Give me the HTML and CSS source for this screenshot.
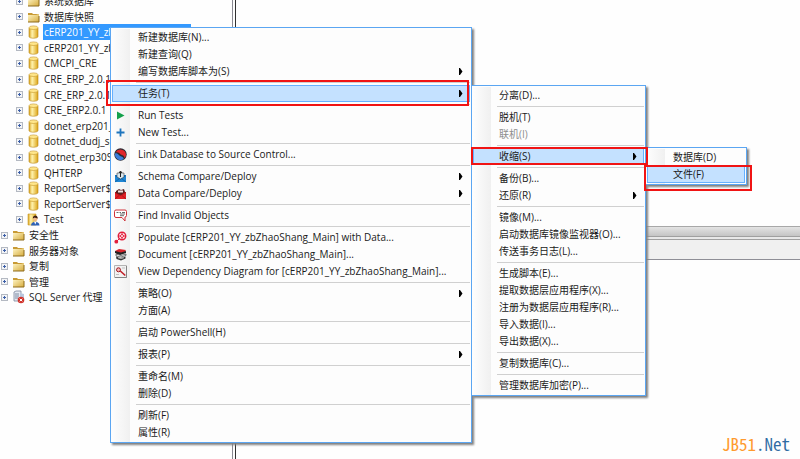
FILE: index.html
```html
<!DOCTYPE html>
<html lang="zh-CN">
<head>
  <meta charset="UTF-8">
  <meta name="viewport" content="width=device-width, initial-scale=1.0">
  <title>SQL Server</title>
  <link rel="stylesheet" href="styles.css">
</head>
<body>

  <svg class="sprite" aria-hidden="true">
    <defs>
      <linearGradient id="gold" x1="0" x2="1" y1="0" y2="0">
        <stop offset="0" stop-color="#d9a21c"/>
        <stop offset="0.35" stop-color="#fff3ae"/>
        <stop offset="1" stop-color="#dba316"/>
      </linearGradient>
      <linearGradient id="paper" x1="0" x2="1" y1="0" y2="1">
        <stop offset="0" stop-color="#fff6c8"/>
        <stop offset="1" stop-color="#d6ab3c"/>
      </linearGradient>
    </defs>
    <symbol id="folder" viewBox="0 0 13 12">
      <path d="M1 2h4l1 1h6v8H1z" fill="#c89a35"/>
      <path d="M1 4h8l3-1v7.500l-1 .5H1z" fill="url(#paper)"/>
      <path d="M1 11h11V5" fill="none" stroke="#8d6a1c"/>
    </symbol>
    <symbol id="db" viewBox="0 0 13 14">
      <path d="M2 3v8.500c0 2.300 9 2.300 9 0V3z" fill="url(#gold)" stroke="#b98616" stroke-width=".6"/>
      <ellipse cx="6.500" cy="2.700" rx="4.500" ry="1.800" fill="#ffe68a" stroke="#c4962a" stroke-width=".6"/>
    </symbol>
    <symbol id="dbuser" viewBox="0 0 13 14">
      <path d="M1 2h8v11H1z" fill="url(#gold)" stroke="#c99a28" stroke-width=".6"/>
      <path d="M4 13.500c0-5 8.500-5 8.500 0z" fill="#2e62b8"/>
      <path d="M7 9.500l1.300 3 1.300-3z" fill="#fff"/>
      <circle cx="8.300" cy="6.800" r="2.300" fill="#f0b98a"/>
      <path d="M5.800 6.500c0-4 5-4 5 0-1.500 0-2.500-1-3-1z" fill="#3a1c10"/>
    </symbol>
    <symbol id="agent" viewBox="0 0 13 14">
      <path d="M2 2l2-1h5v10H2z" fill="#e4e9f2" stroke="#7c879c" stroke-width=".8"/>
      <path d="M3 4h4M3 6h4M3 8h3" stroke="#66758f" stroke-width=".8"/>
      <path d="M8 3l4 1v4H8z" fill="#b9c6dc"/>
      <circle cx="9" cy="10" r="3.300" fill="#d0342c"/>
      <path d="M7.700 8.700l2.600 2.600m0-2.600l-2.600 2.600" stroke="#fff" stroke-width="1"/>
    </symbol>
    <symbol id="arrow" viewBox="0 0 4 7">
      <path d="M0 0h1l2.500 3.500L1 7H0z" fill="#000"/>
    </symbol>
    <symbol id="run" viewBox="0 0 13 13">
      <path d="M3 2.500l7.500 4L3 10.500z" fill="#13a04a"/>
    </symbol>
    <symbol id="plus" viewBox="0 0 13 13">
      <path d="M6.500 2.500v8M2.500 6.500h8" stroke="#1d74bd" stroke-width="1.800"/>
    </symbol>
    <symbol id="link" viewBox="0 0 13 13">
      <circle cx="6.500" cy="6.500" r="6.200" fill="#2b2b33"/>
      <path d="M1.500 4.500a5.600 5.600 0 0 1 10.500 2c0 1.500-.5 2.500-1.500 3.500C10 7 8.500 7.500 6.800 6.500 5.500 5.500 4 3.500 1.500 4.500z" fill="#e0252b"/>
      <path d="M1 5.500C3 4.500 4 6 5.500 7.500S9 8 9.800 11A5.600 5.600 0 0 1 1 5.500z" fill="#3b7ddb"/>
    </symbol>
    <symbol id="schema" viewBox="0 0 13 13">
      <path d="M1 5h11v7H1z" fill="#1573bf"/>
      <path d="M3 3h7v4L6.500 9 3 7z" fill="#d9e6ee" stroke="#444" stroke-width=".6"/>
      <path d="M6.500 7V1.500M5 3l1.500-2L8 3" fill="none" stroke="#222" stroke-width="1"/>
      <path d="M1 6l5.500 4L12 6v6H1z" fill="#1f86d4"/>
      <path d="M1 12l4.500-3.500M12 12L7.500 8.500" stroke="#0c4f8c" stroke-width=".6"/>
    </symbol>
    <symbol id="data" viewBox="0 0 13 13">
      <path d="M1 5h11v7H1z" fill="#b3151b"/>
      <path d="M2 4l3-2 2 1 3-1 1 3-4 3-5-2z" fill="#5a2020"/>
      <path d="M4 3.500h5v2H4z" fill="#ece0e0"/>
      <path d="M1 6l5.500 3L12 6v6H1z" fill="#e02026"/>
      <path d="M1 12l4-3.500M12 12L8 8.500" stroke="#8e0c12" stroke-width=".6"/>
    </symbol>
    <symbol id="find" viewBox="0 0 13 13">
      <path d="M2 1h9q1.500 0 1.500 1.500v4Q12.500 8 11 8v4L8 8.500H2Q.5 8.500.5 7V2.500Q.5 1 2 1z" fill="#fff" stroke="#cf3038" stroke-width="1"/>
      <path d="M2.500 3.500h2M5.500 3.500H7M6 5h5M6 6.700h4M8 3.500h3" stroke="#444" stroke-width=".8"/>
    </symbol>
    <symbol id="populate" viewBox="0 0 13 13">
      <circle cx="8" cy="5" r="3.700" fill="#fff" stroke="#e21f3c" stroke-width="1.500"/>
      <circle cx="8" cy="5" r="1.500" fill="none" stroke="#e21f3c"/>
      <path d="M8 1v2.500M4.500 5h2M9.500 5h2M8 6.500V9M3 10l2.500-2.500" stroke="#e21f3c" stroke-width="1"/>
      <circle cx="2.300" cy="10.700" r="1.900" fill="#e21f3c"/>
    </symbol>
    <symbol id="document" viewBox="0 0 13 13">
      <path d="M1 3l4-2 7 1-2 3-7 1z" fill="#d9232b"/>
      <path d="M1 3l6 1.500 5-1.500v2L6 7 1 5z" fill="#222"/>
      <path d="M2 6l5 1.500L12 6v1.500L7 9 2 8z" fill="#f4f4f4" stroke="#222" stroke-width=".6"/>
      <path d="M2 8.500L6.500 10l5-1.500v2L7 12.500l-4.500-1.500z" fill="#333"/>
      <path d="M4 9.700l3 .8 3-.8" fill="none" stroke="#fff" stroke-width=".6"/>
    </symbol>
    <symbol id="diagram" viewBox="0 0 13 13">
      <path d="M.5.5h12v12H.5z" fill="#f2f2f2" stroke="#b4b4b4"/>
      <path d="M12.500 1v11.500H1" fill="none" stroke="#777" stroke-width=".8"/>
      <circle cx="4.500" cy="4.800" r="2" fill="#f5b9b9" stroke="#a01820" stroke-width="1"/>
      <path d="M6.300 6l5 4.500" stroke="#c01f28" stroke-width="1.600"/>
      <path d="M2 9.500h3M8 3h3" stroke="#aaa" stroke-width=".7"/>
    </symbol>
  </svg>

  <div class="app">
    <aside class="explorer">
      <ul class="tree">
        <li class="node child"><button class="expander" aria-label="展开"></button><svg class="node-icon"><use href="#folder"/></svg><span class="node-text">系统数据库</span></li>
        <li class="node child"><button class="expander" aria-label="展开"></button><svg class="node-icon"><use href="#folder"/></svg><span class="node-text">数据库快照</span></li>
        <li class="node child"><button class="expander" aria-label="展开"></button><svg class="node-icon"><use href="#db"/></svg><span class="node-text selected">cERP201_YY_zb</span></li>
        <li class="node child"><button class="expander" aria-label="展开"></button><svg class="node-icon"><use href="#db"/></svg><span class="node-text">cERP201_YY_zb</span></li>
        <li class="node child"><button class="expander" aria-label="展开"></button><svg class="node-icon"><use href="#db"/></svg><span class="node-text">CMCPI_CRE</span></li>
        <li class="node child"><button class="expander" aria-label="展开"></button><svg class="node-icon"><use href="#db"/></svg><span class="node-text">CRE_ERP_2.0.1_</span></li>
        <li class="node child"><button class="expander" aria-label="展开"></button><svg class="node-icon"><use href="#db"/></svg><span class="node-text">CRE_ERP_2.0.1_</span></li>
        <li class="node child"><button class="expander" aria-label="展开"></button><svg class="node-icon"><use href="#db"/></svg><span class="node-text">CRE_ERP2.0.1</span></li>
        <li class="node child"><button class="expander" aria-label="展开"></button><svg class="node-icon"><use href="#db"/></svg><span class="node-text">donet_erp201_</span></li>
        <li class="node child"><button class="expander" aria-label="展开"></button><svg class="node-icon"><use href="#db"/></svg><span class="node-text">dotnet_dudj_sp</span></li>
        <li class="node child"><button class="expander" aria-label="展开"></button><svg class="node-icon"><use href="#db"/></svg><span class="node-text">dotnet_erp30S</span></li>
        <li class="node child"><button class="expander" aria-label="展开"></button><svg class="node-icon"><use href="#db"/></svg><span class="node-text">QHTERP</span></li>
        <li class="node child"><button class="expander" aria-label="展开"></button><svg class="node-icon"><use href="#db"/></svg><span class="node-text">ReportServer$</span></li>
        <li class="node child"><button class="expander" aria-label="展开"></button><svg class="node-icon"><use href="#db"/></svg><span class="node-text">ReportServer$</span></li>
        <li class="node child"><button class="expander" aria-label="展开"></button><svg class="node-icon"><use href="#dbuser"/></svg><span class="node-text">Test</span></li>
        <li class="node"><button class="expander" aria-label="展开"></button><svg class="node-icon"><use href="#folder"/></svg><span class="node-text">安全性</span></li>
        <li class="node"><button class="expander" aria-label="展开"></button><svg class="node-icon"><use href="#folder"/></svg><span class="node-text">服务器对象</span></li>
        <li class="node"><button class="expander" aria-label="展开"></button><svg class="node-icon"><use href="#folder"/></svg><span class="node-text">复制</span></li>
        <li class="node"><button class="expander" aria-label="展开"></button><svg class="node-icon"><use href="#folder"/></svg><span class="node-text">管理</span></li>
        <li class="node"><button class="expander" aria-label="展开"></button><svg class="node-icon"><use href="#agent"/></svg><span class="node-text">SQL Server 代理</span></li>
      </ul>
    </aside>

    <main class="workspace">
      <div class="editor"></div>
      <div class="splitter"></div>
      <div class="tabs"></div>
      <div class="results"></div>
    </main>
  </div>

  <ul class="menu menu-main">
    <li><button class="item"><span class="icon"></span>新建数据库(N)...</button></li>
    <li><button class="item"><span class="icon"></span>新建查询(Q)</button></li>
    <li><button class="item"><span class="icon"></span>编写数据库脚本为(S)<svg class="arrow"><use href="#arrow"/></svg></button></li>
    <li class="sep"></li>
    <li class="open">
      <button class="item active"><span class="icon"></span>任务(T)<svg class="arrow"><use href="#arrow"/></svg></button>
      <span class="mark mark-task"></span>
      <ul class="menu menu-task">
        <li><button class="item"><span class="icon"></span>分离(D)...</button></li>
        <li class="sep"></li>
        <li><button class="item"><span class="icon"></span>脱机(T)</button></li>
        <li><button class="item" disabled><span class="icon"></span>联机(I)</button></li>
        <li class="sep"></li>
        <li class="open">
          <button class="item active"><span class="icon"></span>收缩(S)<svg class="arrow"><use href="#arrow"/></svg></button>
          <span class="mark mark-shrink"></span>
          <ul class="menu menu-shrink">
            <li><button class="item"><span class="icon"></span>数据库(D)</button></li>
            <li class="open">
              <button class="item active"><span class="icon"></span>文件(F)</button>
              <span class="mark mark-file"></span>
            </li>
          </ul>
        </li>
        <li class="sep"></li>
        <li><button class="item"><span class="icon"></span>备份(B)...</button></li>
        <li><button class="item"><span class="icon"></span>还原(R)<svg class="arrow"><use href="#arrow"/></svg></button></li>
        <li class="sep"></li>
        <li><button class="item"><span class="icon"></span>镜像(M)...</button></li>
        <li><button class="item"><span class="icon"></span>启动数据库镜像监视器(O)...</button></li>
        <li><button class="item"><span class="icon"></span>传送事务日志(L)...</button></li>
        <li class="sep"></li>
        <li><button class="item"><span class="icon"></span>生成脚本(E)...</button></li>
        <li><button class="item"><span class="icon"></span>提取数据层应用程序(X)...</button></li>
        <li><button class="item"><span class="icon"></span>注册为数据层应用程序(R)...</button></li>
        <li><button class="item"><span class="icon"></span>导入数据(I)...</button></li>
        <li><button class="item"><span class="icon"></span>导出数据(X)...</button></li>
        <li class="sep"></li>
        <li><button class="item"><span class="icon"></span>复制数据库(C)...</button></li>
        <li class="sep"></li>
        <li><button class="item"><span class="icon"></span>管理数据库加密(P)...</button></li>
      </ul>
    </li>
    <li class="sep"></li>
    <li><button class="item"><svg class="icon"><use href="#run"/></svg>Run Tests</button></li>
    <li><button class="item"><svg class="icon"><use href="#plus"/></svg>New Test...</button></li>
    <li class="sep"></li>
    <li><button class="item"><svg class="icon"><use href="#link"/></svg>Link Database to Source Control...</button></li>
    <li class="sep"></li>
    <li><button class="item"><svg class="icon"><use href="#schema"/></svg>Schema Compare/Deploy<svg class="arrow"><use href="#arrow"/></svg></button></li>
    <li><button class="item"><svg class="icon"><use href="#data"/></svg>Data Compare/Deploy<svg class="arrow"><use href="#arrow"/></svg></button></li>
    <li class="sep"></li>
    <li><button class="item"><svg class="icon"><use href="#find"/></svg>Find Invalid Objects</button></li>
    <li class="sep"></li>
    <li><button class="item"><svg class="icon"><use href="#populate"/></svg>Populate [cERP201_YY_zbZhaoShang_Main] with Data...</button></li>
    <li><button class="item"><svg class="icon"><use href="#document"/></svg>Document [cERP201_YY_zbZhaoShang_Main]...</button></li>
    <li><button class="item"><svg class="icon"><use href="#diagram"/></svg>View Dependency Diagram for [cERP201_YY_zbZhaoShang_Main]...</button></li>
    <li class="sep"></li>
    <li><button class="item"><span class="icon"></span>策略(O)<svg class="arrow"><use href="#arrow"/></svg></button></li>
    <li><button class="item"><span class="icon"></span>方面(A)</button></li>
    <li class="sep"></li>
    <li><button class="item"><span class="icon"></span>启动 PowerShell(H)</button></li>
    <li class="sep"></li>
    <li><button class="item"><span class="icon"></span>报表(P)<svg class="arrow"><use href="#arrow"/></svg></button></li>
    <li class="sep"></li>
    <li><button class="item"><span class="icon"></span>重命名(M)</button></li>
    <li><button class="item"><span class="icon"></span>删除(D)</button></li>
    <li class="sep"></li>
    <li><button class="item"><span class="icon"></span>刷新(F)</button></li>
    <li><button class="item"><span class="icon"></span>属性(R)</button></li>
  </ul>

  <div class="watermark"><span class="jb">JB51</span>.Net</div>

</body>
</html>
```

FILE: styles.css
```css
* {
  box-sizing: border-box;
}

body {
  margin: 0;
  overflow: hidden;
  background: #fefefe;
  color: #1a1a1a;
  font-family: "Open Sans", "Noto Sans CJK SC", sans-serif;
  font-size: 10px;
}

ul {
  list-style: none;
  margin: 0;
  padding: 0;
}

button {
  font: inherit;
  color: inherit;
}

.sprite {
  position: absolute;
  width: 0;
  height: 0;
}

.app {
  display: flex;
  height: 100vh;
}

/* object explorer */
.explorer {
  flex: 0 0 233px;
  overflow: hidden;
  border-right: 1px solid #8a8a92;
}

.tree {
  margin-top: -7px;
}

.node {
  display: flex;
  align-items: center;
  height: 16px;
  padding-left: 1px;
  white-space: nowrap;
}

.node:nth-child(5n+2),
.node:nth-child(5n+4) {
  height: 15px;
}

.child {
  padding-left: 16px;
}

.expander {
  flex: none;
  width: 7px;
  height: 7px;
  padding: 0;
  border: 1px solid #b4b9c2;
  background:
    linear-gradient(#3c5fa8, #3c5fa8) center / 3px 1px no-repeat,
    linear-gradient(#3c5fa8, #3c5fa8) center / 1px 3px no-repeat,
    #f3f4f6;
}

.node-icon {
  flex: none;
  width: 13px;
  height: 14px;
  margin: 0 3px 0 4px;
}

.node-text {
  padding: 0 1px;
  line-height: 16px;
}

.selected {
  flex: 0 0 148px;
  background: #3399ff;
  color: #fff;
}

/* right side */
.workspace {
  flex: 1;
  display: flex;
  flex-direction: column;
  margin-left: 2px;
  border-left: 1px solid #303030;
}

.editor {
  flex: 0 0 226px;
}

.splitter {
  height: 14px;
  border-top: 1px solid #a8a8a8;
  border-bottom: 1px solid #a0a0a0;
  background: linear-gradient(#e4e4e4, #c4c4c4 75%, #a0a0a0 76%, #a0a0a0 84%, #e8e8e8 85%);
}

.tabs {
  height: 20px;
  background: #f0f0f0;
  border-bottom: 1px solid #8e8e96;
}

.results {
  flex: 1;
}

/* context menus */
.menu {
  position: absolute;
  padding: 1px;
  border: 1px solid #5ba6f2;
  background: linear-gradient(90deg, #fdfdfd, #f0f0f0) 1px 1px / 18px 100% no-repeat, #fdfdfd;
  box-shadow: 2px 2px 2px #808080;
}

.menu-main {
  left: 110px;
  top: 27px;
  width: 362px;
}

.menu-task {
  left: 359px;
  top: 0;
  width: 175px;
}

.menu-shrink {
  left: 172px;
  top: -1px;
  width: 102px;
}

.open {
  position: relative;
}

.item {
  display: flex;
  align-items: center;
  width: 100%;
  height: 17px;
  padding: 0 6px 0 1px;
  border: 1px solid transparent;
  background: none;
  line-height: 15px;
  text-align: left;
  white-space: nowrap;
}

.item:disabled {
  color: #8d8d8d;
}

.item.active,
.item:hover:enabled {
  border-color: #66b0ff;
  background: #c4e1ff;
}

.icon {
  flex: none;
  width: 13px;
  height: 13px;
  margin-right: 11px;
}

.arrow {
  flex: none;
  width: 4px;
  height: 7px;
  margin-left: auto;
}

.sep {
  height: 5px;
  padding: 2px 0;
  margin-left: 24px;
  background: #d0d0d0 content-box;
}

/* red callouts */
.mark {
  position: absolute;
  z-index: 5;
  border: 2px solid #f01414;
  pointer-events: none;
}

.mark-task {
  inset: -5px 1px -4px -6px;
}

.mark-shrink {
  inset: -1px -4px 0 -2px;
}

.mark-file {
  inset: -1px -7px -8px -3px;
}

.watermark {
  position: absolute;
  right: 10px;
  bottom: 3px;
  color: #2f6ca3;
  font-family: "Noto Sans CJK JP", monospace;
  font-feature-settings: "hwid";
  font-size: 17px;
  line-height: 24px;
}

.jb {
  color: #ff9a2e;
}
```
